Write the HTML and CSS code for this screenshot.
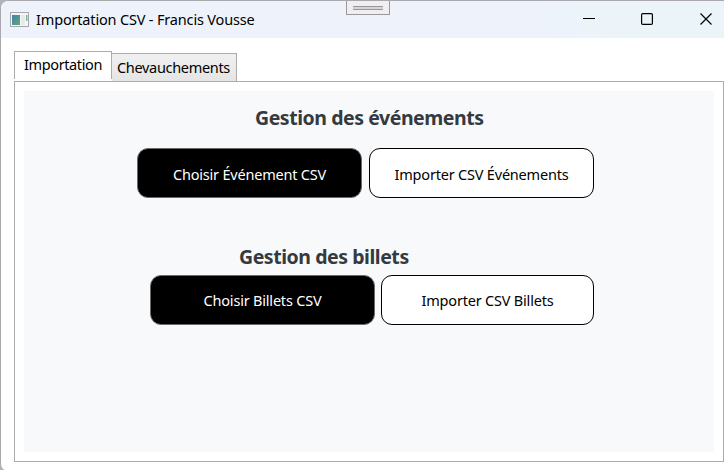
FILE: index.html
```html
<!DOCTYPE html>
<html lang="fr">
<head>
<meta charset="utf-8">
<title>Importation CSV - Francis Vousse</title>
<link rel="stylesheet" href="styles.css">
</head>
<body>
<div class="window">
  <header class="titlebar">
    <svg class="app-icon" width="20" height="16" viewBox="0 0 20 16">
      <defs><linearGradient id="g" x1="0" y1="0" x2="1" y2="1"><stop offset="0" stop-color="#4a7faa"/><stop offset="1" stop-color="#5caa78"/></linearGradient></defs>
      <rect x=".5" y=".5" width="18" height="14" fill="#f4f6f8" stroke="#a5a9ae"/>
      <rect x="2" y="3" width="8" height="10" fill="url(#g)"/>
      <rect x="11" y="3" width="4" height="10" fill="#e6eaed"/>
      <rect x="16" y="3" width="1.5" height="6" fill="#79b795"/>
    </svg>
    <span class="title">Importation CSV - Francis Vousse</span>
    <svg class="controls" width="130" height="14" viewBox="0 0 130 14" fill="none" stroke="#000">
      <path d="M0 5.5h12" />
      <rect x="58.6" y="0.6" width="10.8" height="10.8" rx="1.2" stroke-width="1.2"/>
      <path d="M117.5 0.5l11 11M128.5 0.5l-11 11" stroke-width="1.2"/>
    </svg>
    <span class="grip"><i></i></span>
  </header>
  <nav class="tabs">
    <span class="tab active"><span class="t-imp">Importation</span></span>
    <span class="tab"><span class="t-che">Chevauchements</span></span>
  </nav>
  <main class="panel">
    <div class="content">
      <section class="events">
        <h2 class="h-ev">Gestion des événements</h2>
        <div class="row">
          <button class="btn dark"><span>Choisir Événement CSV</span></button>
          <button class="btn light"><span>Importer CSV Événements</span></button>
        </div>
      </section>
      <section class="tickets">
        <h2 class="h-bi">Gestion des billets</h2>
        <div class="row">
          <button class="btn dark"><span>Choisir Billets CSV</span></button>
          <button class="btn light narrow"><span>Importer CSV Billets</span></button>
        </div>
      </section>
    </div>
  </main>
</div>
</body>
</html>
```

FILE: styles.css
```css
* { box-sizing: border-box; }
body {
  margin: 0;
  width: 724px;
  height: 470px;
  overflow: hidden;
  background: #b4b4b8;
  color: #000;
  font: 14.5px/20px "Noto Sans", "Open Sans", sans-serif;
}
.window {
  height: 472px;
  width: 740px;
  background: #fff;
  border: 1px solid #a9a9ad;
  border-radius: 8px;
  overflow: hidden;
}
.titlebar {
  position: relative;
  display: flex;
  align-items: center;
  width: 723px;
  height: 37px;
  padding: 0 11px 0 9px;
  background: linear-gradient(90deg, #eef3fb 0 75%, #ebf4f8 90%);
}
.app-icon { margin-right: 6px; }
.title {
  padding-bottom: 2px;
  white-space: nowrap;
  letter-spacing: -0.17px;
}
.controls { margin-left: auto; }
.grip {
  position: absolute;
  left: 345px;
  top: -1px;
  width: 44px;
  height: 15px;
  padding: 5px 6px;
  border: 1px solid #999;
  background: #f0eef1;
}
.grip i {
  display: block;
  height: 4px;
  border: solid #999;
  border-width: 1px 0;
  background: #d4d4d4;
}
.tabs {
  display: flex;
  align-items: flex-end;
  height: 43px;
  padding-left: 13px;
}
.tab {
  width: 125px;
  height: 28px;
  padding: 3px 0 0 5px;
  border: 1px solid #acacac;
  border-left: 0;
  border-bottom: 0;
  background: linear-gradient(#f0f0f0, #e5e5e5);
  white-space: nowrap;
}
.tab.active {
  width: 98px;
  height: 28px;
  margin-bottom: 2px;
  padding: 2px 0 0 9px;
  border-left: 1px solid #acacac;
  background: #fff;
}
.t-imp { letter-spacing: -0.38px; }
.t-che { letter-spacing: -0.32px; }
.panel {
  width: 710px;
  height: 381px;
  margin-left: 13px;
  padding: 9px 9px 10px 9px;
  border: 1px solid #acacac;
}
.content {
  height: 361px;
  width: 690px;
  background: #f8f9fb;
}
h2 {
  margin: 0;
  color: #343a40;
  font-size: 19.5px;
  line-height: 28px;
  font-weight: 700;
  letter-spacing: -0.45px;
  white-space: nowrap;
}
.events { padding: 13px 0 0 113px; }
.h-ev { padding-left: 118px; }
.row { display: flex; gap: 7px; }
.events .row { margin-top: 16px; }
.tickets { padding: 45px 0 0 126px; }
.h-bi { padding-left: 89px; }
.tickets .row { margin-top: 4px; gap: 6px; }
.btn {
  width: 225px;
  height: 50px;
  padding: 2px 0 0;
  border: 1px solid #000;
  border-radius: 11px;
  background: #fff;
  color: #000;
  font: inherit;
  letter-spacing: -0.2px;
  white-space: nowrap;
}
.btn.dark { background: #000; color: #fff; border-color: #6a6a6a; }
.btn.narrow { width: 213px; }
.tickets .btn { padding-top: 0; }
```
